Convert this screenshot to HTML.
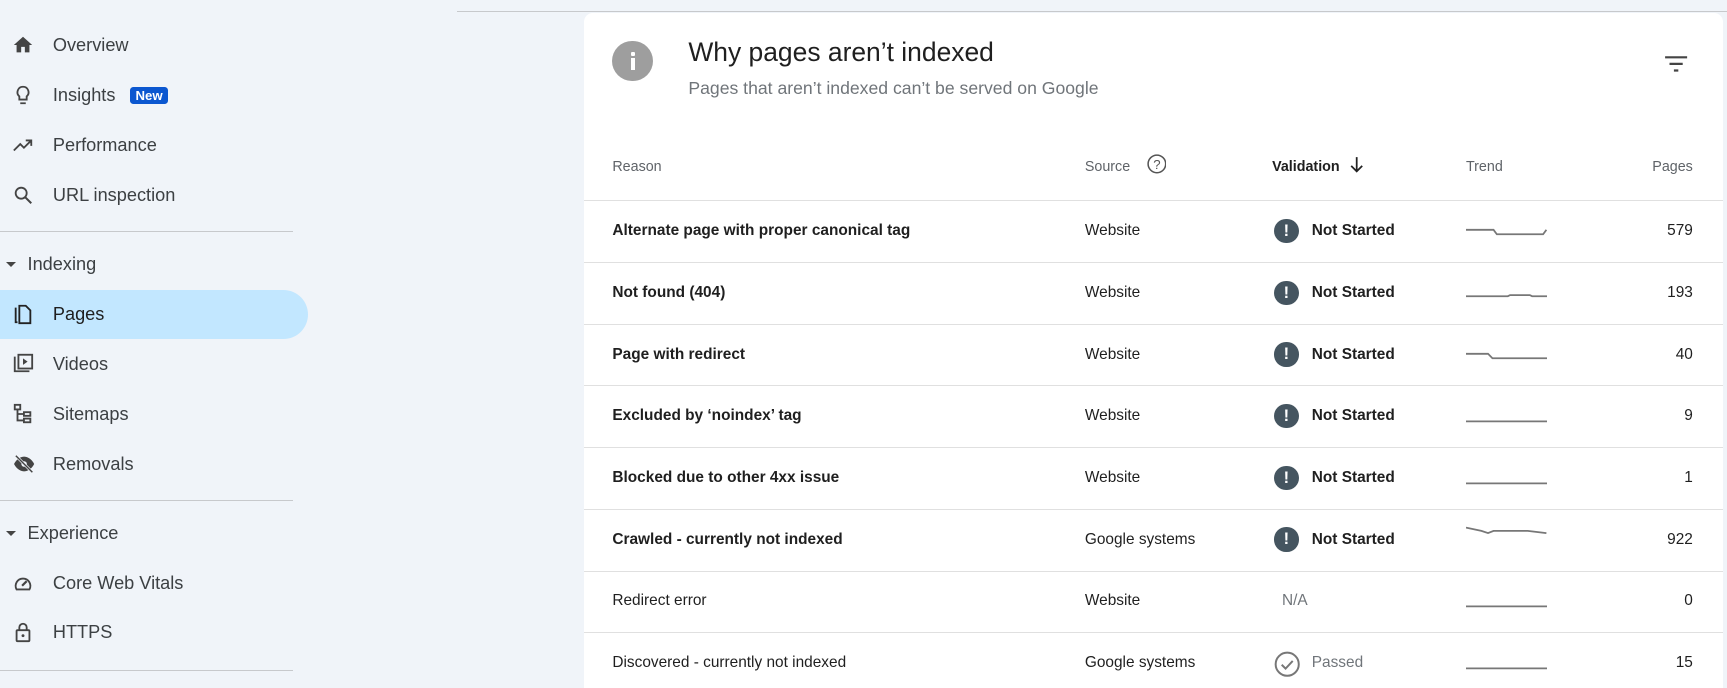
<!DOCTYPE html>
<html><head><meta charset="utf-8"><style>
html,body{margin:0;padding:0;background:#f0f4f9;overflow:hidden}
#w{position:relative;width:1568px;height:625px;zoom:1.1014;font-family:"Liberation Sans",Arial,sans-serif;color:#1f1f1f}
.nav{position:absolute;left:0;height:45px;width:280px;font-size:16.5px;color:#3c4043}
.nav svg{position:absolute;left:11px;top:12px}
.nav span{position:absolute;left:48px;top:13px}
.hl{background:#c2e7ff;border-radius:0 23px 23px 0;color:#1f1f1f}
.div{position:absolute;left:0;width:266px;height:1px;background:#c7c9cc}
.sec{position:absolute;left:0;font-size:16.5px;color:#3c4043}
.sec i{position:absolute;left:5px;top:7px;width:0;height:0;border-left:5px solid transparent;border-right:5px solid transparent;border-top:5px solid #444}
.sec span{position:absolute;left:25px;top:0;white-space:nowrap}
#card{position:absolute;left:530px;top:12px;width:1034px;height:640px;background:#fff;border-radius:8px 8px 0 0}
.th{position:absolute;top:132px;font-size:13px;color:#5f6368}
.row{position:absolute;left:0;width:1034px;height:56px;border-top:1px solid #e0e0e0;font-size:14px}
.row div{position:absolute;top:19px;white-space:nowrap}
.b{font-weight:bold;color:#1f1f1f}
.ic{position:absolute;left:627px;top:16px;width:22px;height:22px;border-radius:50%;background:#455560;color:#fff;font-weight:bold;font-size:15px;text-align:center;line-height:22px}
</style></head><body><div id="w">
<div style="position:absolute;left:415px;top:10px;width:1153px;height:1px;background:#c7c9cc"></div>

<div class="nav" style="top:19px"><svg width="20" height="20" viewBox="0 0 24 24"><path d="M10 20v-6h4v6h5v-8h3L12 3 2 12h3v8z" fill="#444"/></svg><span>Overview</span></div>
<div class="nav" style="top:64px"><svg width="20" height="20" viewBox="0 0 24 24"><path d="M9 21h6M12 3a6 6 0 0 0-4 10.5V17h8v-3.5A6 6 0 0 0 12 3z" fill="none" stroke="#444" stroke-width="2"/></svg><span>Insights</span><b style="position:absolute;left:118px;top:15px;background:#0b57d0;color:#fff;font-size:12px;padding:1px 5px;border-radius:3px">New</b></div>
<div class="nav" style="top:110px"><svg width="20" height="20" viewBox="0 0 24 24"><path d="M2 18l7-7 4 4 8-8M15 7h6v6" fill="none" stroke="#444" stroke-width="2"/></svg><span>Performance</span></div>
<div class="nav" style="top:155px"><svg width="20" height="20" viewBox="0 0 24 24"><circle cx="10" cy="10" r="6" fill="none" stroke="#444" stroke-width="2"/><path d="M14.5 14.5L21 21" stroke="#444" stroke-width="2.2"/></svg><span>URL inspection</span></div>
<div class="div" style="top:210px"></div>
<div class="sec" style="top:231px"><i></i><span>Indexing</span></div>
<div class="nav hl" style="top:263px"><svg width="20" height="20" viewBox="0 0 24 24"><path d="M4 5v16h2M8 3h7l5 5v14H8z" fill="none" stroke="#222" stroke-width="2"/></svg><span>Pages</span></div>
<div class="nav" style="top:308px"><svg width="20" height="20" viewBox="0 0 24 24"><path d="M3 5v16h16" fill="none" stroke="#444" stroke-width="2"/><rect x="7" y="3" width="15" height="15" fill="none" stroke="#444" stroke-width="2"/><path d="M12 7v7l5-3.5z" fill="#444"/></svg><span>Videos</span></div>
<div class="nav" style="top:354px"><svg width="20" height="20" viewBox="0 0 24 24"><rect x="3" y="2" width="6" height="5" fill="none" stroke="#444" stroke-width="2"/><rect x="13" y="10" width="7" height="4" fill="none" stroke="#444" stroke-width="2"/><rect x="13" y="17" width="7" height="4" fill="none" stroke="#444" stroke-width="2"/><path d="M6 7v12h7M6 12h7" fill="none" stroke="#444" stroke-width="2"/></svg><span>Sitemaps</span></div>
<div class="nav" style="top:399px"><svg width="22" height="20" viewBox="0 0 24 24"><path d="M1 12c3-6 8-8 11-8s8 2 11 8c-3 6-8 8-11 8S4 18 1 12z" fill="#444"/><circle cx="12" cy="12" r="3" fill="#f0f4f9"/><path d="M3 3l18 18" stroke="#f0f4f9" stroke-width="3"/><path d="M3 3l18 18" stroke="#444" stroke-width="1.6"/></svg><span>Removals</span></div>
<div class="div" style="top:454px"></div>
<div class="sec" style="top:475px"><i></i><span>Experience</span></div>
<div class="nav" style="top:507px"><svg width="20" height="20" viewBox="0 0 24 24"><path d="M5 19a8 8 0 1 1 14 0z" fill="none" stroke="#444" stroke-width="2"/><path d="M11 15l5-5" stroke="#444" stroke-width="2.4"/></svg><span>Core Web Vitals</span></div>
<div class="nav" style="top:552px"><svg width="20" height="20" viewBox="0 0 24 24"><rect x="5" y="10" width="14" height="12" rx="1" fill="none" stroke="#444" stroke-width="2"/><path d="M8 10V7a4 4 0 0 1 8 0v3" fill="none" stroke="#444" stroke-width="2"/><circle cx="12" cy="16" r="1.6" fill="#444"/></svg><span>HTTPS</span></div>
<div class="div" style="top:608px"></div>

<div id="card">
<div style="position:absolute;left:26px;top:25px;width:37px;height:37px;border-radius:50%;background:#9e9e9e"><div style="position:absolute;left:16.5px;top:10px;width:4px;height:4px;background:#fff;border-radius:1px"></div><div style="position:absolute;left:16.5px;top:16px;width:4px;height:11px;background:#fff"></div></div>
<div style="position:absolute;left:95px;top:22px;font-size:24px;color:#1f1f1f">Why pages aren’t indexed</div>
<div style="position:absolute;left:95px;top:59px;font-size:16px;color:#70757a">Pages that aren’t indexed can’t be served on Google</div>
<svg style="position:absolute;left:981px;top:37px" width="22" height="18" viewBox="0 0 22 18"><path d="M1 3h20M5 9h12M9 15h4" stroke="#444" stroke-width="2"/></svg>

<div class="th" style="left:26px">Reason</div>
<div class="th" style="left:455px">Source</div>
<svg style="position:absolute;left:511px;top:128px" width="18" height="18" viewBox="0 0 18 18"><circle cx="9" cy="9" r="8" fill="none" stroke="#555" stroke-width="1.4"/><text x="9" y="13.5" font-size="12" text-anchor="middle" fill="#555" font-family="Liberation Sans">?</text></svg>
<div class="th" style="left:625px;color:#1f1f1f;font-weight:bold">Validation</div>
<svg style="position:absolute;left:695px;top:130px" width="14" height="16" viewBox="0 0 14 16"><path d="M7 1v13M2 9l5 5 5-5" fill="none" stroke="#222" stroke-width="1.6"/></svg>
<div class="th" style="left:801px">Trend</div>
<div class="th" style="right:27px">Pages</div>

<div class="row" style="top:170px"><div class="b" style="left:26px">Alternate page with proper canonical tag</div><div style="left:455px">Website</div><span class="ic">!</span><div class="b" style="left:661px">Not Started</div><svg style="position:absolute;left:801px;top:18px" width="74" height="20"><path d="M0 8h25l3 4h42l3-4" fill="none" stroke="#777" stroke-width="1.6"/></svg><div style="right:27px">579</div></div>
<div class="row" style="top:226px"><div class="b" style="left:26px">Not found (404)</div><div style="left:455px">Website</div><span class="ic">!</span><div class="b" style="left:661px">Not Started</div><svg style="position:absolute;left:801px;top:18px" width="74" height="20"><path d="M0 12h38l2-1h18l2 1h14" fill="none" stroke="#777" stroke-width="1.6"/></svg><div style="right:27px">193</div></div>
<div class="row" style="top:282px"><div class="b" style="left:26px">Page with redirect</div><div style="left:455px">Website</div><span class="ic">!</span><div class="b" style="left:661px">Not Started</div><svg style="position:absolute;left:801px;top:18px" width="74" height="20"><path d="M0 8h20l4 4h50" fill="none" stroke="#777" stroke-width="1.6"/></svg><div style="right:27px">40</div></div>
<div class="row" style="top:338px"><div class="b" style="left:26px">Excluded by ‘noindex’ tag</div><div style="left:455px">Website</div><span class="ic">!</span><div class="b" style="left:661px">Not Started</div><svg style="position:absolute;left:801px;top:18px" width="74" height="20"><path d="M0 14h74" fill="none" stroke="#777" stroke-width="1.6"/></svg><div style="right:27px">9</div></div>
<div class="row" style="top:394px"><div class="b" style="left:26px">Blocked due to other 4xx issue</div><div style="left:455px">Website</div><span class="ic">!</span><div class="b" style="left:661px">Not Started</div><svg style="position:absolute;left:801px;top:18px" width="74" height="20"><path d="M0 14h74" fill="none" stroke="#777" stroke-width="1.6"/></svg><div style="right:27px">1</div></div>
<div class="row" style="top:450px"><div class="b" style="left:26px">Crawled - currently not indexed</div><div style="left:455px">Google systems</div><span class="ic">!</span><div class="b" style="left:661px">Not Started</div><svg style="position:absolute;left:801px;top:10px" width="74" height="20"><path d="M0 6l14 3 6 2 5-2h31l17 2" fill="none" stroke="#777" stroke-width="1.6"/></svg><div style="right:27px">922</div></div>
<div class="row" style="top:506px"><div style="left:26px">Redirect error</div><div style="left:455px">Website</div><div style="left:634px;color:#70757a">N/A</div><svg style="position:absolute;left:801px;top:18px" width="74" height="20"><path d="M0 14h74" fill="none" stroke="#777" stroke-width="1.6"/></svg><div style="right:27px">0</div></div>
<div class="row" style="top:562px"><div style="left:26px">Discovered - currently not indexed</div><div style="left:455px">Google systems</div><svg style="position:absolute;left:627px;top:16px" width="24" height="24" viewBox="0 0 24 24"><circle cx="12" cy="12" r="10.5" fill="none" stroke="#777" stroke-width="1.8"/><path d="M7 12.5l3.5 3.5 6.5-7" fill="none" stroke="#777" stroke-width="1.8"/></svg><div style="left:661px;color:#70757a">Passed</div><svg style="position:absolute;left:801px;top:18px" width="74" height="20"><path d="M0 14h74" fill="none" stroke="#777" stroke-width="1.6"/></svg><div style="right:27px">15</div></div>
</div>
</div></body></html>
